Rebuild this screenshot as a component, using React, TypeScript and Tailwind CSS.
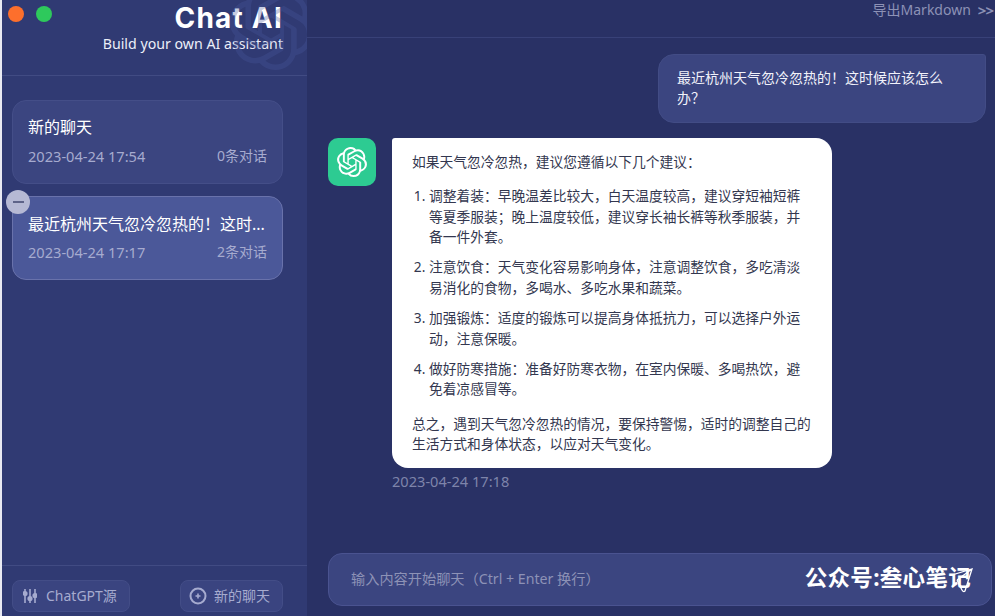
import { SiOpenai } from "react-icons/si";

const sessions = [
  { title: "新的聊天", time: "2023-04-24 17:54", count: "0条对话", active: false },
  { title: "最近杭州天气忽冷忽热的！这时...", time: "2023-04-24 17:17", count: "2条对话", active: true },
];

const tips = [
  "调整着装：早晚温差比较大，白天温度较高，建议穿短袖短裤等夏季服装；晚上温度较低，建议穿长袖长裤等秋季服装，并备一件外套。",
  "注意饮食：天气变化容易影响身体，注意调整饮食，多吃清淡易消化的食物，多喝水、多吃水果和蔬菜。",
  "加强锻炼：适度的锻炼可以提高身体抵抗力，可以选择户外运动，注意保暖。",
  "做好防寒措施：准备好防寒衣物，在室内保暖、多喝热饮，避免着凉感冒等。",
];

function SlidersIcon() {
  return (
    <svg width="14" height="16" viewBox="0 0 14 16" fill="none" stroke="currentColor" strokeWidth="1.6">
      <path d="M2 1v14M7 1v14M12 1v14" />
      <circle cx="2" cy="5.5" r="1.8" fill="currentColor" />
      <circle cx="7" cy="10.5" r="1.8" fill="currentColor" />
      <circle cx="12" cy="7.5" r="1.8" fill="currentColor" />
    </svg>
  );
}

function PlusCircleIcon() {
  return (
    <svg width="18" height="18" viewBox="0 0 18 18" fill="none" stroke="currentColor">
      <circle cx="9" cy="9" r="7.5" strokeWidth="2" />
      <path d="M6.5 9h5M9 6.5v5" strokeWidth="1.6" />
    </svg>
  );
}

export default function App() {
  return (
    <div className="flex h-[616px] w-[995px] overflow-hidden bg-[#e9eaf3] pl-[2px] font-['Noto_Sans','Noto_Sans_CJK_SC',sans-serif] text-[13.76px] leading-[20.4px]">
      {/* sidebar */}
      <aside className="relative flex w-[305px] shrink-0 flex-col overflow-hidden bg-[#303a73]">
        <div className="flex h-[76px] shrink-0 justify-between border-b border-[#414b83] pl-[6px] pr-[24px]">
          <div className="flex gap-[12px] pt-[6px]">
            <span className="h-4 w-4 rounded-full bg-[#fd6f2c]" />
            <span className="h-4 w-4 rounded-full bg-[#2ec95c]" />
          </div>
          <div className="flex flex-col items-end text-white">
            <div className="mt-[1px] font-['Inter',sans-serif] text-[28px] font-bold leading-[34px] tracking-[1.2px]">Chat AI</div>
            <div className="text-[14.2px] leading-[18px] text-[#eceef8]">Build your own AI assistant</div>
          </div>
        </div>
        <SiOpenai className="pointer-events-none absolute right-[-6px] top-[-14px] h-[84px] w-[84px] text-[#4a5a9f] opacity-30" />

        <div className="flex flex-1 flex-col gap-[12px] px-[10px] pt-[24px]">
          {sessions.map((s) => (
            <div
              key={s.time}
              className={
                s.active
                  ? "relative flex h-[84px] w-[271px] flex-col justify-between rounded-[14px] border border-[#6972ab] bg-[#4b5899] px-[15px] pb-[17px] pt-[16px]"
                  : "relative flex h-[84px] w-[271px] flex-col justify-between rounded-[14px] border border-[#444e88] bg-[#3b4580] px-[15px] pb-[17px] pt-[15px]"
              }
            >
              <div className="whitespace-nowrap text-[16px] leading-[22px] text-white">{s.title}</div>
              <div className="flex items-center justify-between text-[14.6px] leading-[20px] text-[#a6abcf]">
                <span>{s.time}</span>
                <span className="text-[14px]">{s.count}</span>
              </div>
              {s.active && (
                <div className="absolute left-[-7px] top-[-7px] flex h-6 w-6 items-center justify-center rounded-full bg-[#b6b9d4]">
                  <span className="h-[2px] w-[11px] bg-[#5e6388]" />
                </div>
              )}
            </div>
          ))}
        </div>

        <div className="flex h-[51px] shrink-0 items-start justify-between border-t border-[#414b83] pl-[10px] pr-[24px] pt-[14px] text-[14px] text-[#a6abcf]">
          <div className="flex h-[32px] w-[118px] items-center gap-[9px] rounded-[8px] border border-[#434d87] bg-[#3a4480] pl-[10px]">
            <SlidersIcon />
            <span>ChatGPT源</span>
          </div>
          <div className="flex h-[32px] w-[103px] items-center gap-[7px] rounded-[8px] border border-[#434d87] bg-[#3a4480] pl-[8px]">
            <PlusCircleIcon />
            <span>新的聊天</span>
          </div>
        </div>
      </aside>

      {/* chat */}
      <main className="flex min-w-0 flex-1 flex-col bg-[#293165]">
        <div className="flex h-[38px] shrink-0 items-start justify-end gap-[7px] border-b border-[#384178] pr-[2px] text-[14px] text-[#8d92b6]">
          <span>导出Markdown</span>
          <span className="text-[15px] font-bold tracking-[-1px]">&gt;&gt;</span>
        </div>

        <div className="flex flex-1 flex-col pl-[21px] pr-[20px] pt-[16px]">
          <div className="mr-[-11px] w-[328px] self-end rounded-[16px] rounded-tr-[3px] border border-[#424c85] bg-[#3b4580] px-[18px] py-[13px] text-[14px] text-[#f1f2fa]">
            最近杭州天气忽冷忽热的！这时候应该怎么办？
          </div>

          <div className="mt-[15px] flex gap-[16px]">
            <div className="flex h-12 w-12 shrink-0 items-center justify-center rounded-[10px] bg-[#2dcb92]">
              <SiOpenai className="h-[30px] w-[30px] text-white" />
            </div>
            <div>
              <div className="w-[440px] rounded-[16px] rounded-tl-[3px] bg-white px-[20px] pb-[13px] pt-[14px] text-[#33374f]">
                <p>如果天气忽冷忽热，建议您遵循以下几个建议：</p>
                <ol className="my-[14px] flex list-decimal flex-col gap-[10px] pl-[17px]">
                  {tips.map((t) => (
                    <li key={t}>{t}</li>
                  ))}
                </ol>
                <p>总之，遇到天气忽冷忽热的情况，要保持警惕，适时的调整自己的生活方式和身体状态，以应对天气变化。</p>
              </div>
              <div className="mt-[3px] text-[14.6px] leading-[20px] text-[#7e84aa]">2023-04-24 17:18</div>
            </div>
          </div>
        </div>

        <div className="relative mb-[10px] ml-[21px] mr-[3px] flex h-[53px] shrink-0 items-center rounded-[14px] border border-[#4a5390] bg-[#3b4580] pl-[22px] text-[14.2px] text-[#8d92b6]">
          输入内容开始聊天（Ctrl + Enter 换行）
          <span className="absolute right-[20px] top-[11px] text-[22.5px] font-bold leading-[26px] tracking-[0.3px] text-white">公众号:叁心笔记</span>
          <svg className="absolute right-[18px] top-[14px]" width="22" height="26" viewBox="0 0 22 26" fill="none" stroke="white" strokeWidth="1.3">
            <path d="M1 7 L21 1 L14 23 Q12 25 10 20 L6 12 M21 1 L6 12" />
          </svg>
        </div>
      </main>
    </div>
  );
}
